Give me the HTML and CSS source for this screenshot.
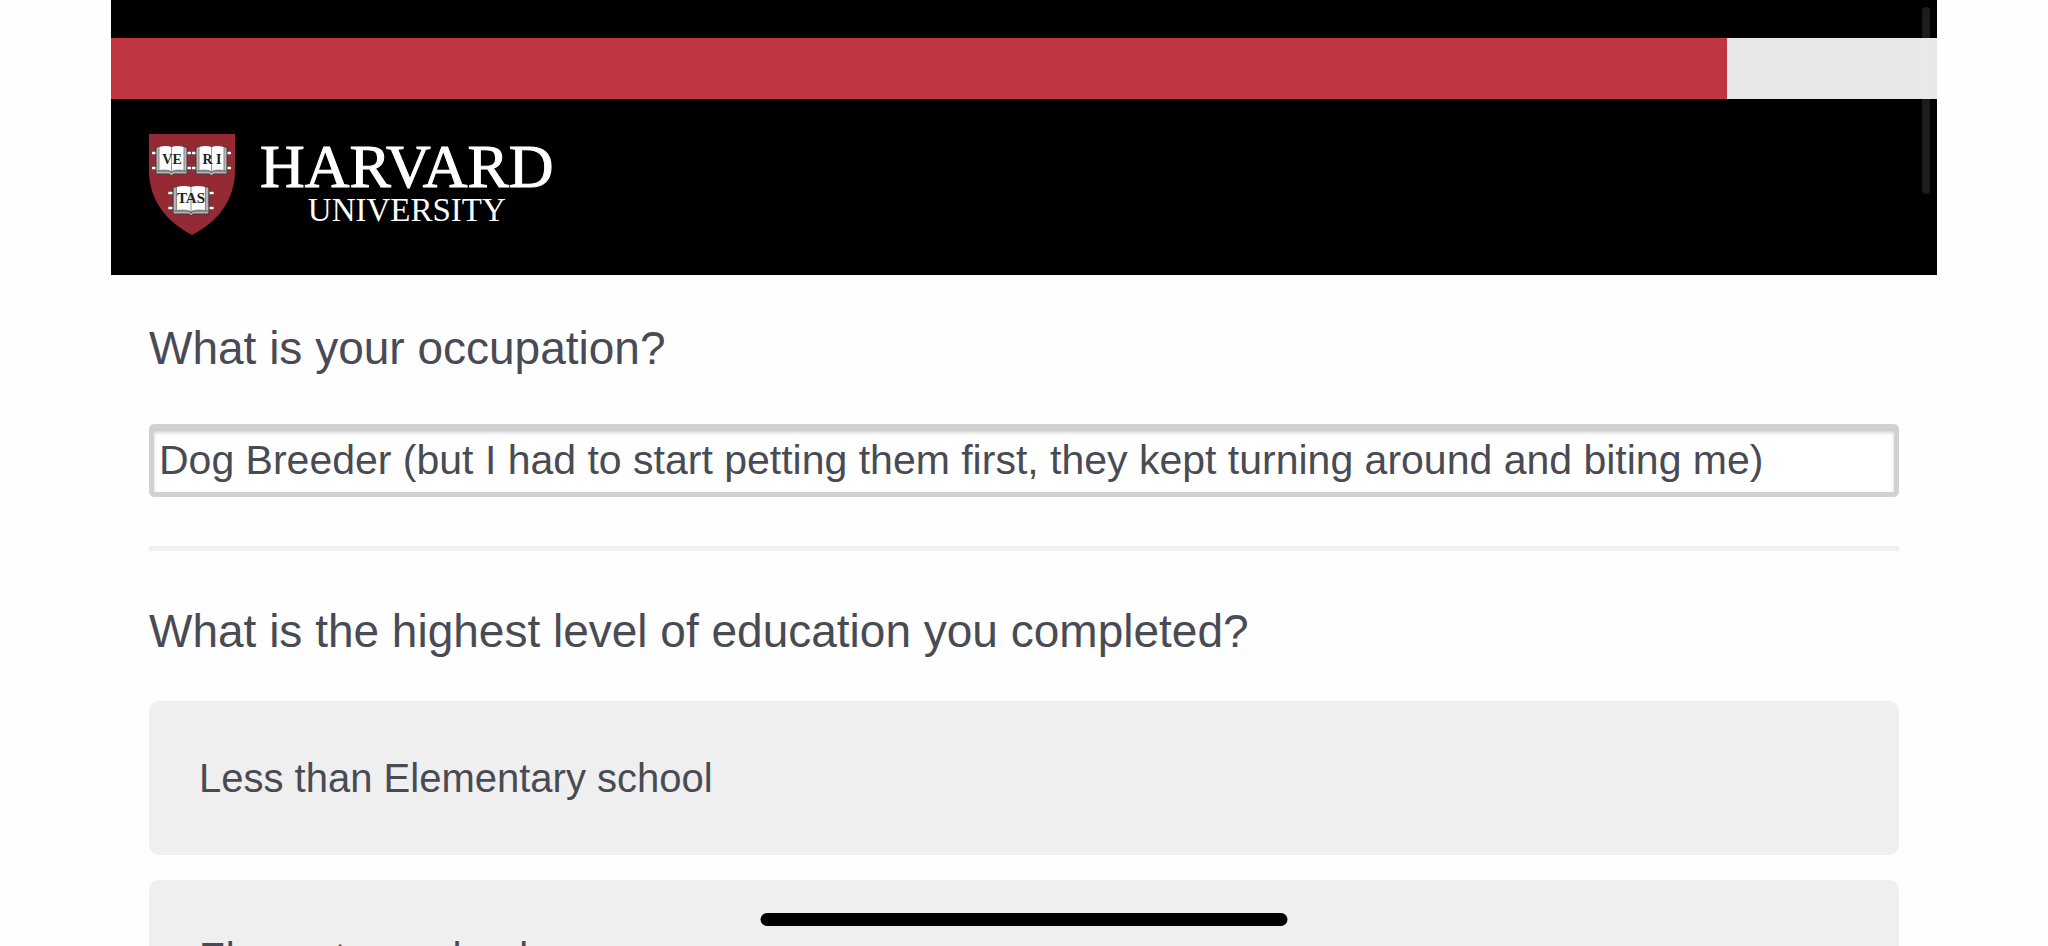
FILE: index.html
```html
<!DOCTYPE html>
<html lang="en">
<head>
  <meta charset="utf-8">
  <meta name="viewport" content="width=device-width, initial-scale=1">
  <title>Harvard University Survey</title>
  <link rel="stylesheet" href="styles.css">
</head>
<body>
  <div class="page">
    <header class="header">
      <div class="progress" role="progressbar" aria-label="Survey progress" aria-valuenow="89" aria-valuemin="0" aria-valuemax="100">
        <div class="progress-fill" style="width: 88.5%"></div>
      </div>
      <div class="logo">
        <svg class="shield" viewBox="0 0 86 101" aria-hidden="true">
          <defs>
            <g id="book">
              <!-- clasps -->
              <path d="M-4 7H35M-4 22H35" stroke="#7d6a6c" stroke-width="4"/>
              <path d="M-4 7H35M-4 22H35" stroke="#fff" stroke-width="2"/>
              <!-- cover and pages -->
              <path d="M0 1H31V28H17.500L15.500 30L13.500 28H0Z" fill="#b9b6b6" stroke="#403638" stroke-width="1"/>
              <path d="M1 25H14L15.500 27L17 25H30" fill="none" stroke="#555" stroke-width="1"/>
              <path d="M3 1Q10 -1 15.500 1Q21 -1 28 1V24Q21 22 15.500 25Q10 22 3 24Z" fill="#fff"/>
              <path d="M3 1V24M28 1V24" stroke="#888" stroke-width="1"/>
              <path d="M15.500 1V25" stroke="#999" stroke-width="1"/>
            </g>
          </defs>
          <path d="M0 0H86V36C86 67 68 88 43 101C18 88 0 67 0 36Z" fill="#962a34"/>
          <use href="#book" x="7" y="12"/>
          <use href="#book" x="47" y="12"/>
          <use href="#book" transform="translate(24 52) scale(1.16 1)"/>
          <g class="motto">
            <text x="23" y="30">VE</text>
            <text x="63" y="30">R I</text>
            <text class="motto-tas" x="42" y="69">TAS</text>
          </g>
        </svg>
        <div class="wordmark">
          <span class="wordmark-name">HARVARD</span>
          <span class="wordmark-sub">UNIVERSITY</span>
        </div>
      </div>
    </header>

    <form class="survey">
      <div class="question">
        <label class="question-text" for="occupation">What is your occupation?</label>
        <input class="text-input" type="text" id="occupation" name="occupation" value="Dog Breeder (but I had to start petting them first, they kept turning around and biting me)">
      </div>

      <hr class="separator">

      <fieldset class="question">
        <legend class="question-text">What is the highest level of education you completed?</legend>
        <div class="choices">
          <label class="choice">
            <input type="radio" name="education" value="1">
            <span>Less than Elementary school</span>
          </label>
          <label class="choice">
            <input type="radio" name="education" value="2">
            <span>Elementary school</span>
          </label>
        </div>
      </fieldset>
    </form>
  </div>

  <div class="scroll-thumb"></div>
  <div class="home-indicator"></div>
</body>
</html>
```

FILE: styles.css
```css
* {
  box-sizing: border-box;
}

body {
  margin: 0;
  height: 100vh;
  overflow: hidden;
  background-color: #fefefe;
  color: #494b54;
  font-family: "Liberation Sans", Arial, sans-serif;
  font-size: 40px;
}

.page {
  margin: 0 111px;
}

.header {
  padding-top: 38px;
  background-color: #000;
}

.progress {
  height: 61px;
  background-color: #e8e8ea;
}

.progress-fill {
  height: 100%;
  background-color: #c13540;
}

.logo {
  display: flex;
  gap: 25px;
  padding: 35px 38px 40px;
}

.shield {
  width: 86px;
  height: 101px;
}

.motto {
  fill: #222;
  font-family: "Liberation Serif", serif;
  font-size: 14px;
  font-weight: bold;
  text-anchor: middle;
}

.motto-tas {
  font-size: 15px;
}

.wordmark {
  display: flex;
  flex-direction: column;
  align-items: center;
  padding-top: 4px;
  color: #fff;
  font-family: "Liberation Serif", serif;
}

.wordmark-name {
  font-size: 62px;
  line-height: 56px;
  -webkit-text-stroke: 1px #fff;
}

.wordmark-sub {
  font-size: 33px;
  line-height: 32px;
}

.survey {
  padding: 49px 38px;
}

.question {
  margin: 0;
  padding: 0;
  border: 0;
}

.question-text {
  display: block;
  padding: 0;
  margin-bottom: 46px;
  font-size: 46px;
  line-height: 48px;
}

.text-input {
  display: block;
  width: 100%;
  height: 73px;
  margin-top: 52px;
  padding: 0 5px;
  border: 5px solid #d1d1d3;
  border-radius: 5px;
  background-color: #fff;
  box-shadow: inset 0 4px 4px -1px #c4c4c6;
  color: inherit;
  font: inherit;
  font-size: 41px;
}

.separator {
  height: 5px;
  margin: 49px 0 56px;
  border: 0;
  background-color: #f0f0f0;
}

.choices {
  display: flex;
  flex-direction: column;
  gap: 25px;
}

.choice {
  position: relative;
  padding: 54px 50px;
  border-radius: 10px;
  background-color: #efefef;
  line-height: 46px;
}

.choice input {
  position: absolute;
  opacity: 0;
}

.scroll-thumb {
  position: fixed;
  top: 7px;
  right: 118px;
  width: 8px;
  height: 187px;
  border-radius: 4px;
  background-color: rgba(255, 255, 255, 0.11);
}

.home-indicator {
  position: fixed;
  bottom: 20px;
  left: 50%;
  width: 527px;
  height: 13px;
  border-radius: 7px;
  background-color: #000;
  transform: translateX(-50%);
}
```
